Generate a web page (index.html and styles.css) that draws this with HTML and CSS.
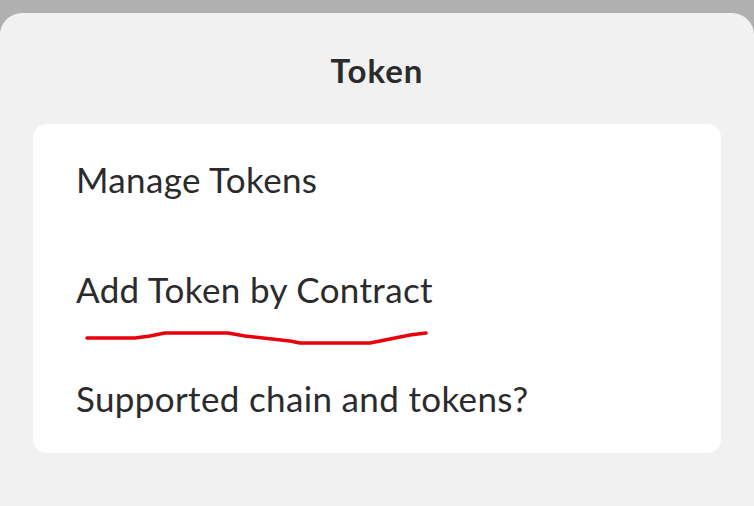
FILE: index.html
```html
<!DOCTYPE html>
<html>
<head>
<meta charset="utf-8">
<link rel="stylesheet" href="styles.css">
</head>
<body>
<div class="sheet">
  <div class="title">Token</div>
  <div class="card">
    <div class="row">Manage Tokens</div>
    <div class="row">Add Token by Contract</div>
    <div class="row">Supported chain and tokens?</div>
  </div>
</div>
<svg class="scribble" width="754" height="506" viewBox="0 0 754 506">
  <path d="M87 338 L135 338 L150 336 L165 333 L228 333 L245 336 L290 341 L300 343 L370 343 L380 341 L410 335 L426 333" fill="none" stroke="#e8000b" stroke-width="3.5" stroke-linecap="round" stroke-linejoin="round"/>
</svg>
</body>
</html>
```
FILE: styles.css
```css
html, body {
  margin: 0;
  padding: 0;
}
body {
  background: #b0b0b0;
  width: 754px;
  height: 506px;
  overflow: hidden;
  position: relative;
  font-family: "Lato", "Noto Sans", sans-serif;
  color: #2b2b2d;
}
.sheet {
  margin-top: 13px;
  height: 493px;
  background: #f1f1f1;
  border-radius: 22px 22px 0 0;
}
.title {
  padding-top: 39px;
  line-height: 36px;
  height: 36px;
  text-align: center;
  font-weight: 700;
  font-size: 33px;
  letter-spacing: 1px;
  margin-bottom: 36px;
}
.card {
  margin: 0 33px;
  background: #ffffff;
  border-radius: 14px;
  height: 329px;
  display: flex;
  flex-direction: column;
  box-sizing: border-box;
}
.row {
  height: 110px;
  display: flex;
  align-items: center;
  padding-left: 43px;
  font-size: 35px;
  letter-spacing: 0.35px;
}
.scribble {
  position: absolute;
  left: 0;
  top: 0;
}
```
